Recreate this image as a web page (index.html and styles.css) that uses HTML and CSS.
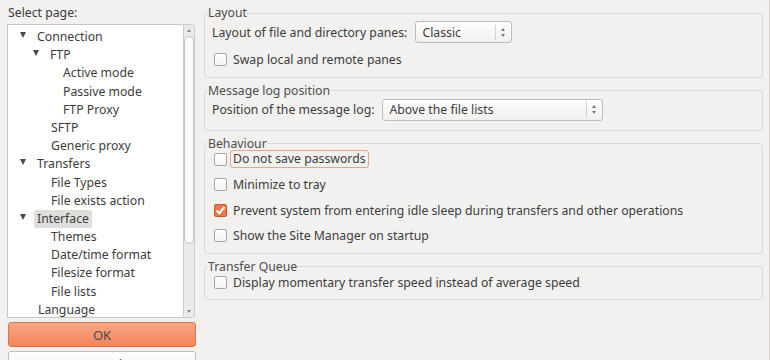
FILE: index.html
```html
<!DOCTYPE html>
<html lang="en">
<head>
    <meta charset="UTF-8">
    <title>Settings</title>
    <link rel="stylesheet" href="styles.css">
</head>
<body>
    <div class="dialog">
        <div class="sidebar">
            <div class="select-label">Select page:</div>
            <div class="tree-wrap">
                <ul class="tree">
                    <li class="lvl0"><span class="caret"></span>Connection</li>
                    <li class="lvl1"><span class="caret"></span>FTP</li>
                    <li class="lvl2">Active mode</li>
                    <li class="lvl2">Passive mode</li>
                    <li class="lvl2">FTP Proxy</li>
                    <li class="lvl1">SFTP</li>
                    <li class="lvl1">Generic proxy</li>
                    <li class="lvl0"><span class="caret"></span>Transfers</li>
                    <li class="lvl1">File Types</li>
                    <li class="lvl1">File exists action</li>
                    <li class="lvl0"><span class="caret"></span><span class="selected">Interface</span></li>
                    <li class="lvl1">Themes</li>
                    <li class="lvl1">Date/time format</li>
                    <li class="lvl1">Filesize format</li>
                    <li class="lvl1">File lists</li>
                    <li class="lvl0">Language</li>
                </ul>
                <div class="scrollbar">
                    <span class="arrow up"></span>
                    <div class="thumb"></div>
                    <span class="arrow down"></span>
                </div>
            </div>
            <button class="btn btn-ok">OK</button>
            <button class="btn btn-cancel">Cancel</button>
        </div>

        <div class="content">
            <fieldset class="group">
                <legend>Layout</legend>
                <div class="row">
                    <span>Layout of file and directory panes:</span>
                    <div class="combo combo-short"><span>Classic</span><span class="spin"></span></div>
                </div>
                <label class="check"><span class="box"></span>Swap local and remote panes</label>
            </fieldset>

            <fieldset class="group group-row">
                <legend>Message log position</legend>
                <div class="row">
                    <span>Position of the message log:</span>
                    <div class="combo combo-long"><span>Above the file lists</span><span class="spin"></span></div>
                </div>
            </fieldset>

            <fieldset class="group">
                <legend>Behaviour</legend>
                <label class="check"><span class="box"></span><span class="focus">Do not save passwords</span></label>
                <label class="check"><span class="box"></span>Minimize to tray</label>
                <label class="check"><span class="box checked"></span>Prevent system from entering idle sleep during transfers and other operations</label>
                <label class="check"><span class="box"></span>Show the Site Manager on startup</label>
            </fieldset>

            <fieldset class="group">
                <legend>Transfer Queue</legend>
                <label class="check"><span class="box"></span>Display momentary transfer speed instead of average speed</label>
            </fieldset>
        </div>
    </div>
</body>
</html>
```

FILE: styles.css
```css
body {
    margin: 0;
    background: #f2f1f0;
    font-family: 'Noto Sans', sans-serif;
    font-size: 12.25px;
    color: #3c3c3c;
    overflow: hidden;
}

.dialog {
    display: flex;
    height: 360px;
    border-right: 1px solid #d6d3ce;
    width: 769px;
}

/* Left side: page tree */
.sidebar {
    width: 188px;
    padding: 6px 0 0 7px;
    display: flex;
    flex-direction: column;
}

.sidebar > * {
    flex-shrink: 0;
}

.select-label {
    padding-left: 1px;
    height: 18px;
    line-height: 14px;
}

.tree-wrap {
    display: flex;
    height: 294px;
}

.tree {
    list-style: none;
    margin: 0;
    padding: 3px 0 0 0;
    flex: 1;
    background: #fff;
    border: 1px solid #c9c6c1;
    border-right: none;
    overflow: hidden;
}

.tree li {
    height: 18.2px;
    line-height: 18px;
    white-space: nowrap;
}

.lvl0 { padding-left: 30px; }
.lvl1 { padding-left: 43px; }
.lvl2 { padding-left: 55px; }

.caret {
    display: inline-block;
    width: 0;
    height: 0;
    margin-left: -18px;
    margin-right: 11px;
    border-left: 3.5px solid transparent;
    border-right: 3.5px solid transparent;
    border-top: 6px solid #4a4a4a;
    vertical-align: 3px;
}

.selected {
    display: inline-block;
    background: #e0dedb;
    border-radius: 2px;
    padding: 0 3px;
    margin-left: -3px;
    line-height: 18px;
}

.scrollbar {
    width: 10px;
    border: 1px solid #cfccc7;
    border-radius: 0 3px 3px 0;
    background: #ebeae8;
    display: flex;
    flex-direction: column;
    align-items: center;
}

.arrow {
    width: 0;
    height: 0;
    border-left: 2.5px solid transparent;
    border-right: 2.5px solid transparent;
    margin: 4px 0;
}

.arrow.up { border-bottom: 3px solid #8a8782; }
.arrow.down { border-top: 3px solid #8a8782; margin-top: auto; }

.thumb {
    width: 8px;
    height: 206px;
    background: linear-gradient(to right, #f7f7f6, #fdfdfd);
    border: 1px solid #c8c5c0;
    border-radius: 5px;
}

.btn {
    font-family: inherit;
    font-size: 13px;
    color: #4a4a4a;
    border-radius: 3px;
    height: 25px;
    width: 188px;
    margin-left: 1px;
    padding: 0;
}

.btn-ok {
    margin-top: 4px;
    background: linear-gradient(#f9a785, #f1855a);
    border: 1px solid #d8764f;
}

.btn-cancel {
    margin-top: 4px;
    background: linear-gradient(#fefefe, #f1f0ef);
    border: 1px solid #c2bfba;
}

/* Right side: option groups */
.content {
    flex: 1;
    padding: 6px 6px 0 9px;
}

.group {
    margin: 0 0 6px 0;
    padding: 0 6px 4px 7px;
    border: 1px solid #dad8d4;
    border-radius: 4px;
}

.group-row {
    padding-bottom: 8px;
}

.group legend {
    padding: 0;
    margin-left: -4px;
    color: #4d4d4d;
    line-height: 14px;
}

.row {
    display: flex;
    align-items: center;
    gap: 8px;
    height: 24px;
}

.row + .check {
    margin-top: 3px;
}

legend + .check {
    margin-top: -4px;
}

.combo {
    height: 22px;
    border: 1px solid #bfbcb7;
    border-radius: 3px;
    background: linear-gradient(#fefefe, #f1f0ee);
    display: flex;
    align-items: center;
    padding-left: 6px;
    box-sizing: border-box;
}

.combo span:first-child { flex: 1; }

.combo-short { width: 97px; }
.combo-long { width: 221px; }

.spin {
    width: 15px;
    height: 15px;
    border-left: 1px solid #d3d0cb;
    position: relative;
}

.spin::before,
.spin::after {
    content: "";
    position: absolute;
    left: 5px;
    border-left: 2.5px solid transparent;
    border-right: 2.5px solid transparent;
}

.spin::before { top: 3px; border-bottom: 3px solid #7a7873; }
.spin::after { top: 9px; border-top: 3px solid #7a7873; }

.check {
    display: flex;
    align-items: center;
    height: 25.5px;
    padding-left: 2px;
}

.box {
    width: 11px;
    height: 11px;
    border: 1px solid #a9a6a1;
    border-radius: 2px;
    background: linear-gradient(#ffffff, #f4f3f2);
    margin-right: 6px;
    flex-shrink: 0;
}

.box.checked {
    background: #f07746;
    border-color: #c25a30;
    position: relative;
}

.box.checked::after {
    content: "";
    position: absolute;
    left: 3px;
    top: 0;
    width: 3px;
    height: 7px;
    border-right: 2px solid #fff;
    border-bottom: 2px solid #fff;
    transform: rotate(40deg);
}

.focus {
    border: 1px solid #f0a283;
    border-radius: 3px;
    padding: 0 2px;
    margin-left: -3px;
    line-height: 16px;
}
```
